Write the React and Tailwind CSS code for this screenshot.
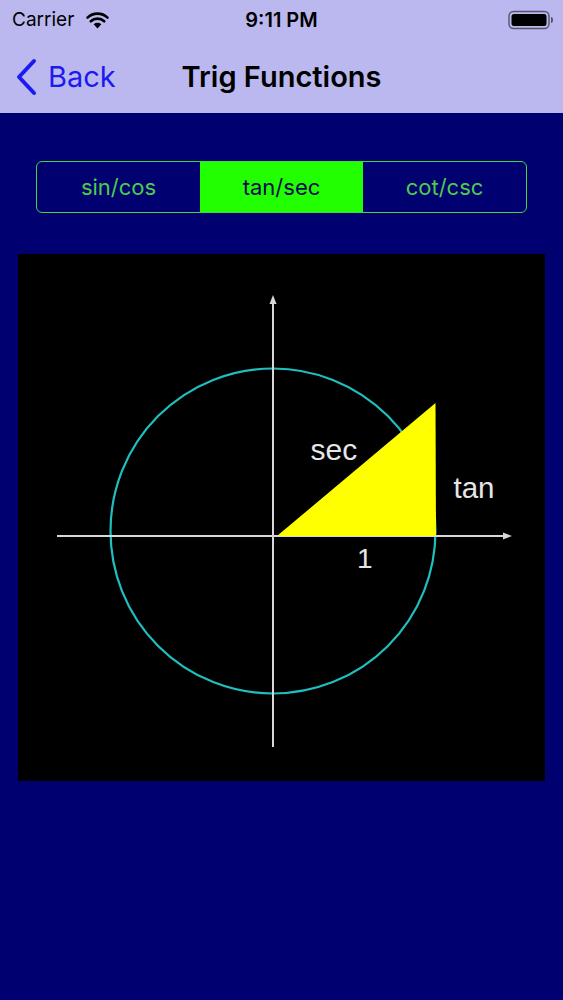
import React from 'react'

function Wifi() {
  return (
    <svg width="25" height="18" viewBox="0 0 24 18">
      <path d="M12 17.5 L8.2 13.2 A5.6 5.6 0 0 1 15.8 13.2 Z" fill="#000" />
      <path d="M5.3 10.3 A9.8 9.8 0 0 1 18.7 10.3" stroke="#000" strokeWidth="2.6" fill="none" strokeLinecap="round" />
      <path d="M2 6.6 A14.6 14.6 0 0 1 22 6.6" stroke="#000" strokeWidth="2.6" fill="none" strokeLinecap="round" />
    </svg>
  )
}

function Battery() {
  return (
    <svg width="46" height="20" viewBox="0 0 46 20">
      <rect x="1" y="1.5" width="40" height="17" rx="4.5" fill="none" stroke="#55546a" strokeWidth="1.4" />
      <rect x="3.5" y="4" width="35" height="12" rx="2.5" fill="#000" />
      <path d="M43 7 Q45 7 45 10 Q45 13 43 13 Z" fill="#55546a" />
    </svg>
  )
}

const labelFont = "'Liberation Sans', Arial, sans-serif"

function Diagram() {
  return (
    <svg width="527" height="527" viewBox="0 0 527 527" className="block">
      <rect width="527" height="527" fill="#000" />
      <circle cx="255" cy="277" r="162.5" fill="none" stroke="#1fbfbf" strokeWidth="2.2" />
      <line x1="39" y1="282" x2="490" y2="282" stroke="#d8d8d8" strokeWidth="2" />
      <path d="M494 282 L485 278.5 L485 285.5 Z" fill="#d8d8d8" />
      <line x1="255" y1="46" x2="255" y2="493" stroke="#d8d8d8" strokeWidth="2" />
      <path d="M255 41 L251.5 50 L258.5 50 Z" fill="#d8d8d8" />
      <polygon points="259,282 418,282 417.5,149" fill="#ffff00" />
      <text x="292.5" y="206" fill="#e6e6e6" fontSize="30" fontFamily={labelFont}>sec</text>
      <text x="435.5" y="244" fill="#e6e6e6" fontSize="29.5" fontFamily={labelFont}>tan</text>
      <text x="339" y="314" fill="#e6e6e6" fontSize="28" fontFamily={labelFont}>1</text>
    </svg>
  )
}

export default function App() {
  const tabs = ['sin/cos', 'tan/sec', 'cot/csc']
  return (
    <div className="w-[563px] h-[1000px] flex flex-col bg-[#000070]" style={{ fontFamily: "Inter, 'Liberation Sans', sans-serif" }}>
      <header className="bg-[#bab8ee] h-[113px] flex flex-col">
        <div className="h-[40px] flex items-center pl-[12px] pr-[10px] relative text-[19px] text-black">
          <div className="flex items-center gap-[11px]">
            <span>Carrier</span>
            <Wifi />
          </div>
          <span className="absolute left-0 right-0 text-center font-semibold text-[20px] pointer-events-none">9:11 PM</span>
          <div className="ml-auto mr-[-1px]">
            <Battery />
          </div>
        </div>
        <div className="flex-1 flex items-center relative px-[15px]">
          <div className="flex items-center gap-[11px] text-[#1b1bf0]">
            <svg width="22" height="38" viewBox="0 0 22 38">
              <path d="M19 3 L4 19 L19 35" stroke="#1b1bf0" strokeWidth="4" fill="none" strokeLinecap="round" strokeLinejoin="round" />
            </svg>
            <span className="text-[29px] leading-none">Back</span>
          </div>
          <span className="absolute left-0 right-0 text-center text-[29px] font-semibold text-black pointer-events-none">Trig Functions</span>
        </div>
      </header>
      <main className="flex-1 flex flex-col items-center">
        <div className="mt-[48px] w-[491px] h-[52px] flex border-[1.5px] border-[#3fd83f] rounded-[6px] overflow-hidden">
          {tabs.map((t, i) => (
            <div
              key={t}
              className={
                i === 1
                  ? 'flex-1 flex items-center justify-center bg-[#22ff00] text-[#0a0a55] text-[22px]'
                  : 'flex-1 flex items-center justify-center text-[#4ccc4c] text-[22px]'
              }
            >
              {t}
            </div>
          ))}
        </div>
        <div className="mt-[41px]">
          <Diagram />
        </div>
      </main>
    </div>
  )
}
